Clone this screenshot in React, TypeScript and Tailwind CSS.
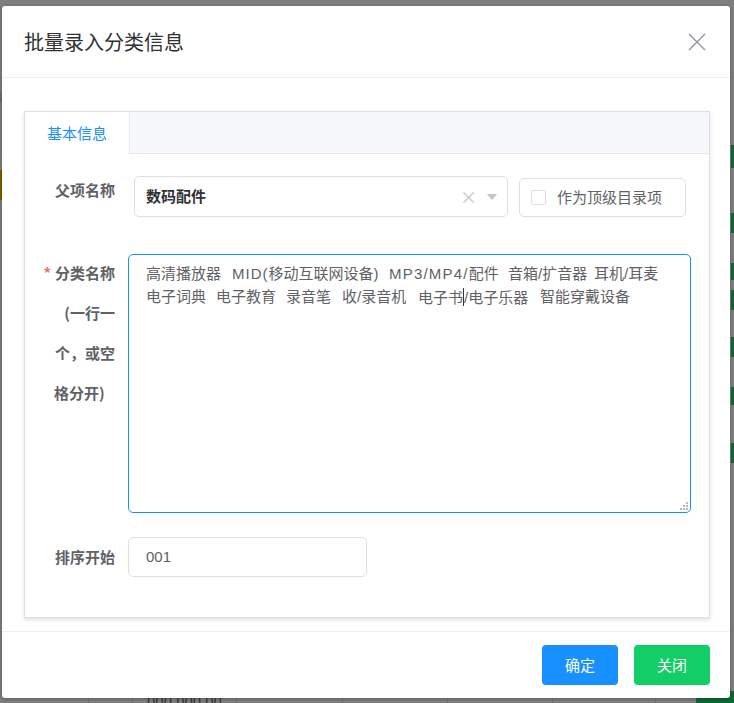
import React from "react";

const fieldFont = "font-['Noto_Sans_CJK_SC','Liberation_Sans',sans-serif]";
const mixedFont = "font-['Liberation_Sans','Noto_Sans_CJK_SC',sans-serif]";

// textarea content, one entry per word with the width it takes up (incl. the spaces after it)
const lines: { text: React.ReactNode; w?: number }[][] = [
  [
    { text: "高清播放器", w: 86 },
    {
      text: (
        <>
          <span className="tracking-[1px]">MID(</span>移动互联网设备<span className="tracking-[1px]">)</span>
        </>
      ),
      w: 157,
    },
    {
      text: (
        <>
          <span className="tracking-[1.2px]">MP3/MP4/</span>配件
        </>
      ),
      w: 119,
    },
    { text: "音箱/扩音器", w: 86 },
    { text: "耳机/耳麦" },
  ],
  [
    { text: "电子词典", w: 70 },
    { text: "电子教育", w: 70 },
    { text: "录音笔", w: 56 },
    { text: "收/录音机", w: 76 },
    {
      text: (
        <>
          电子书
          <span className="inline-block h-[18px] w-px translate-y-[3px] bg-[#333]" />
          /电子乐器
        </>
      ),
      w: 122,
    },
    { text: "智能穿戴设备" },
  ],
];

// faint bits of the page that sits behind the modal overlay
function BackdropHints() {
  const greens = [
    [145, 23],
    [213, 20],
    [263, 17],
    [290, 20],
    [337, 20],
    [387, 18],
    [443, 20],
  ];
  return (
    <>
      <div className="absolute left-0 top-[170px] h-[30px] w-[3px] bg-[#7f6000]" />
      <div className="absolute left-0 top-[92px] h-[10px] w-[2px] bg-[#6f6f6f]" />
      {greens.map(([top, h]) => (
        <div
          key={top}
          className="absolute right-0 w-[3px] bg-[#0b6b34]"
          style={{ top, height: h }}
        />
      ))}
      <div className="absolute bottom-0 left-0 flex h-[5px] w-full">
        {[88, 132, 236, 342, 447, 552, 655].map((x) => (
          <div
            key={x}
            className="absolute top-0 h-full w-px bg-[#707070]"
            style={{ left: x }}
          />
        ))}
      </div>
      <div className="absolute bottom-[-9px] left-[147px] text-[15px] text-[#333]">
        000,000.00
      </div>
      <div className="absolute bottom-0 right-0 h-[12px] w-[38px] rounded-tl-[3px] bg-[#0b6b34]" />
    </>
  );
}

function CloseIcon() {
  return (
    <svg width="18" height="18" viewBox="0 0 18 18" fill="none">
      <path d="M1 1L17 17M17 1L1 17" stroke="#909399" strokeWidth="1.4" />
    </svg>
  );
}

export default function App() {
  return (
    <div
      className={`relative h-[703px] w-[734px] overflow-hidden bg-[#7f7f7f] ${fieldFont}`}
    >
      <BackdropHints />

      {/* Dialog */}
      <div className="absolute left-[2px] top-[6px] flex h-[692px] w-[728px] flex-col rounded-[3px] bg-white shadow-[0_1px_4px_rgba(0,0,0,0.3)]">
        {/* Header */}
        <div className="flex h-[72px] shrink-0 items-center justify-between border-b border-[#f0f0f0] pl-[22px] pr-[24px]">
          <h2 className="text-[20px] font-normal text-[#303133]">批量录入分类信息</h2>
          <CloseIcon />
        </div>

        {/* Body */}
        <div className="flex-1 pl-[22px] pt-[33px]">
          <div className="flex h-[507px] w-[686px] flex-col border border-[#dcdfe6] shadow-[0_2px_4px_rgba(0,0,0,0.12)]">
            {/* Tabs */}
            <div className="flex h-[42px] shrink-0 border-b border-[#e4e7ed] bg-[#f5f7fa]">
              <div className="-mb-px flex w-[105px] items-center justify-center border-r border-[#e4e7ed] bg-white text-[15px] text-[#1890ff]">
                基本信息
              </div>
            </div>

            {/* Form */}
            <div className="flex flex-col pt-[22px] text-[15px]">
              {/* 父项名称 */}
              <div className="flex items-start">
                <div className="w-[90px] text-right font-bold leading-[28px] text-[#606266]">
                  父项名称
                </div>
                <div className="ml-[19px] flex h-[41px] w-[374px] items-center rounded-[5px] border border-[#dcdfe6] pl-[11px] pr-[10px]">
                  <span className="flex-1 font-bold text-[#303133]">数码配件</span>
                  <span className="mr-[10px] text-[17px] leading-none text-[#c0c4cc]">×</span>
                  <svg width="10" height="6" viewBox="0 0 10 6">
                    <path d="M0 0H10L5 6Z" fill="#c0c4cc" />
                  </svg>
                </div>
                <div className="ml-[11px] mt-[2px] flex h-[39px] w-[167px] items-center gap-[11px] rounded-[5px] border border-[#dcdfe6] pl-[11px]">
                  <span className="h-[15px] w-[15px] rounded-[2px] border border-[#dcdfe6] bg-white" />
                  <span className="text-[#606266]">作为顶级目录项</span>
                </div>
              </div>

              {/* 分类名称 */}
              <div className="mt-[37px] flex items-start">
                <div className="-mt-px flex w-[90px] flex-col font-bold leading-[40px] text-[#606266]">
                  <div className="text-right">
                    <span className="mr-[4px] text-[#f56c6c]">*</span>分类名称
                  </div>
                  <div className="text-right">(一行一</div>
                  <div className="text-right">个，或空</div>
                  <div className="pl-[29px]">格分开)</div>
                </div>
                <div
                  className={`relative ml-[13px] h-[259px] w-[563px] rounded-[5px] border border-[#1890ff] px-[17px] pt-[7px] leading-[23px] text-[#606266] ${mixedFont}`}
                >
                  {lines.map((line, i) => (
                    <div key={i} className="flex whitespace-nowrap">
                      {line.map((seg, j) => (
                        <span
                          key={j}
                          className="inline-block shrink-0"
                          style={seg.w ? { width: seg.w } : undefined}
                        >
                          {seg.text}
                        </span>
                      ))}
                    </div>
                  ))}
                  {/* resize grip */}
                  <svg
                    className="absolute bottom-[2px] right-[2px]"
                    width="9"
                    height="9"
                    viewBox="0 0 9 9"
                  >
                    <rect x="7" y="1" width="2" height="2" fill="#b8b8b8" />
                    <rect x="4" y="4" width="2" height="2" fill="#b8b8b8" />
                    <rect x="7" y="4" width="2" height="2" fill="#b8b8b8" />
                    <rect x="1" y="7" width="2" height="2" fill="#b8b8b8" />
                    <rect x="4" y="7" width="2" height="2" fill="#b8b8b8" />
                    <rect x="7" y="7" width="2" height="2" fill="#b8b8b8" />
                  </svg>
                </div>
              </div>

              {/* 排序开始 */}
              <div className="mt-[24px] flex items-start">
                <div className="w-[90px] text-right font-bold leading-[40px] text-[#606266]">
                  排序开始
                </div>
                <div
                  className={`ml-[13px] flex h-[40px] w-[239px] items-center rounded-[5px] border border-[#dcdfe6] px-[17px] text-[#606266] ${mixedFont}`}
                >
                  001
                </div>
              </div>
            </div>
          </div>
        </div>

        {/* Footer */}
        <div className="flex h-[67px] shrink-0 items-center justify-end gap-[16px] border-t border-[#f0f0f0] pr-[20px]">
          <button className="flex h-[40px] w-[76px] items-center justify-center rounded-[4px] bg-[#1890ff] text-[15px] text-white">
            确定
          </button>
          <button className="flex h-[40px] w-[76px] items-center justify-center rounded-[4px] bg-[#13ce66] text-[15px] text-white">
            关闭
          </button>
        </div>
      </div>
    </div>
  );
}
